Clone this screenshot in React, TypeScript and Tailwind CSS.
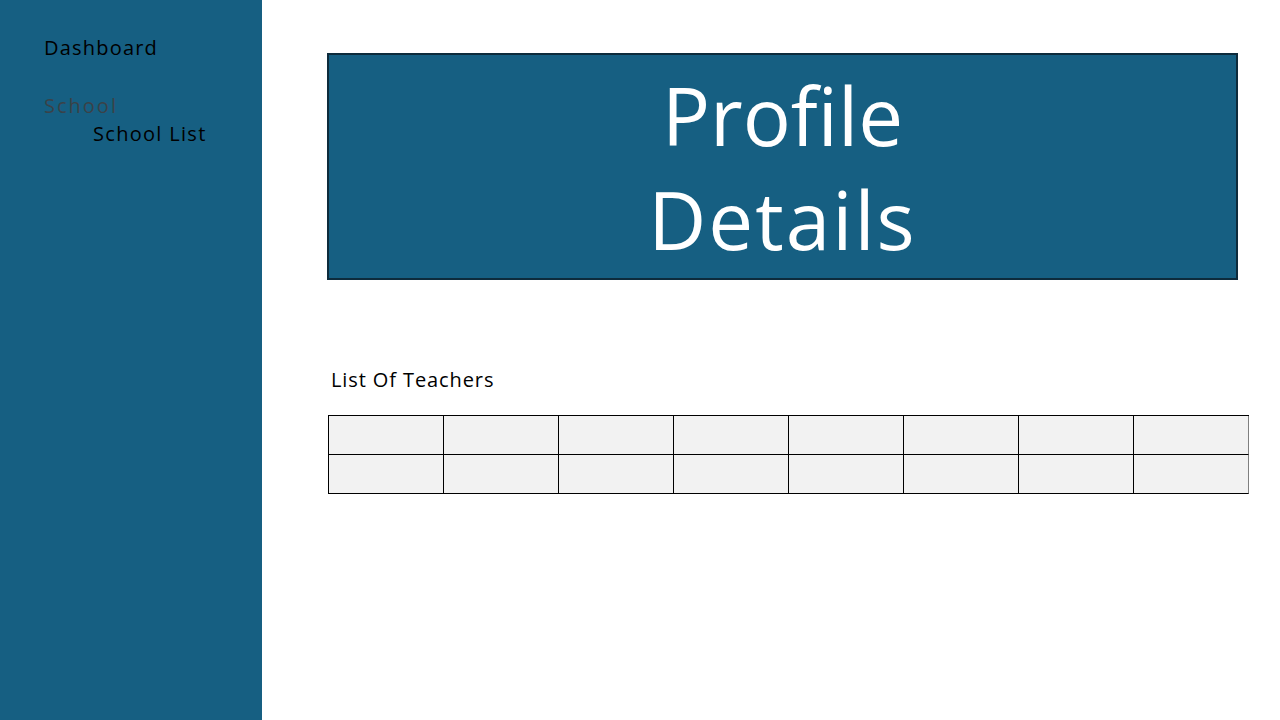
const App = () => {
    const cols = [0, 1, 2, 3, 4, 5, 6, 7];
    const rows = [0, 1];

    return (
        <div className="flex h-[720px] w-[1280px] bg-white font-['Open_Sans',sans-serif] text-black">

            <aside className="w-[262px] shrink-0 bg-[#165f82] pl-[44px] pt-[34px]">
                <p className="text-[20px] leading-[28px] tracking-[1.2px] text-black">Dashboard</p>
                <p className="mt-[30px] text-[20px] leading-[28px] tracking-[2px] text-[#3a4248]">School</p>
                <p className="pl-[49px] text-[20px] leading-[28px] tracking-[1.3px] text-black">School List</p>
            </aside>

            <main className="flex-1 pl-[65px] pt-[53px]">
                <div className="flex h-[227px] w-[911px] flex-col items-center justify-center border-2 border-[#0d2b3c] bg-[#165f82] text-white">
                    <p className="text-[80px] leading-[104px]">Profile</p>
                    <p className="text-[80px] leading-[104px] tracking-[2px]">Details</p>
                </div>

                <p className="mt-[86px] pl-[4px] text-[20px] leading-[28px] tracking-[0.9px]">List Of Teachers</p>

                <div className="mt-[21px] ml-[1px] w-[921px] border-t border-l border-black">
                    {rows.map((r) => (
                        <div key={r} className="flex">
                            {cols.map((c) => (
                                <div
                                    key={c}
                                    className={
                                        c === 7
                                            ? "h-[39px] w-[115px] border-r border-b border-r-[#7f7f7f] border-b-black bg-[#f2f2f2]"
                                            : "h-[39px] w-[115px] border-r border-b border-black bg-[#f2f2f2]"
                                    }
                                />
                            ))}
                        </div>
                    ))}
                </div>
            </main>

        </div>
    );
};

export default App;
